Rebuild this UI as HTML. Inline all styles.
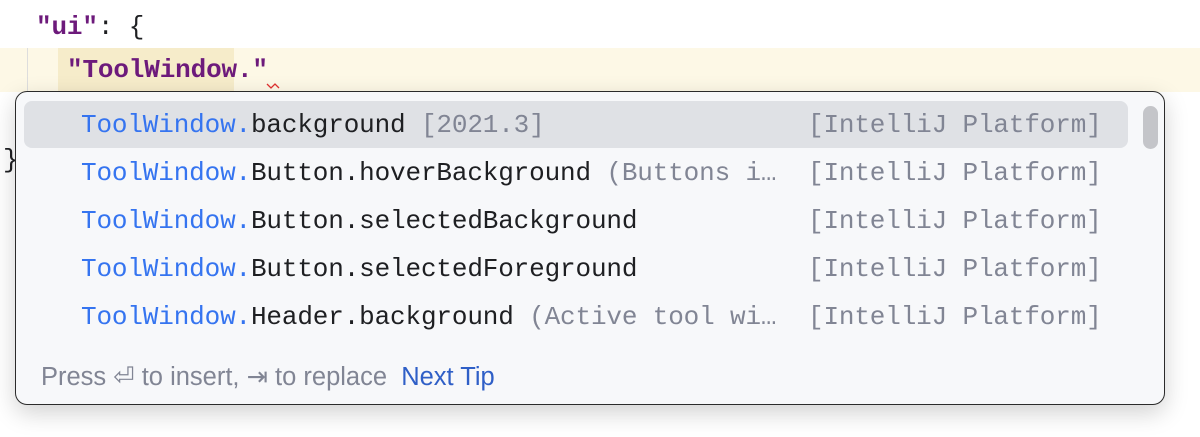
<!DOCTYPE html>
<html><head><meta charset="utf-8"><style>
*{margin:0;padding:0;box-sizing:border-box}
body{width:1200px;height:437px;background:#fff;position:relative;overflow:hidden;font-family:"Liberation Mono",monospace;}
.mono{font-family:"Liberation Mono",monospace;font-size:26px;white-space:pre;position:absolute;line-height:30px;letter-spacing:-0.15px}
.band{position:absolute;left:0;top:48px;width:1200px;height:44px;background:#fdf8e6}
.hl{position:absolute;left:58px;top:48px;width:176px;height:44px;background:#f6ecca}
.guide{position:absolute;left:27px;top:48px;width:1px;height:44px;background:#ddd}
.popup{position:absolute;left:15px;top:91px;width:1150px;height:314px;background:#f7f8fa;border:1px solid #2b2b2b;border-radius:12px;box-shadow:0 8px 24px rgba(0,0,0,.18)}
.sel{position:absolute;left:8px;top:9px;width:1104px;height:47px;background:#dfe1e5;border-radius:8px}
.sb{position:absolute;left:1127px;top:14px;width:15px;height:43px;background:#c4c5c9;border-radius:8px}
.row{left:65px}
.b{color:#3574f0}.k{color:#1e1f22}.g{color:#818594}
.r{position:absolute;left:792px;color:#818594}
.foot{position:absolute;left:25px;top:270px;font-family:"Liberation Sans",sans-serif;font-size:25.5px;color:#818594;white-space:pre}
.foot a{color:#2f5fc7;text-decoration:none}
</style></head><body>
<div class="band"></div><div class="hl"></div><div class="guide"></div>
<div class="mono" style="left:36px;top:12px;color:#1e1f22"><b style="color:#6d1a7b">"ui"</b>: {</div>
<div class="mono" style="left:67px;top:55px"><b style="color:#6d1a7b">"ToolWindow."</b></div>
<svg style="position:absolute;left:266px;top:83px" width="14" height="6"><path d="M1 1 L5 5 L9 1 L13 5" stroke="#e0302f" fill="none" stroke-width="1.3"/></svg>
<div class="mono" style="left:3px;top:145px;color:#1e1f22">}</div>
<div class="popup">
<div class="sel"></div><div class="sb"></div>
<div class="mono row" style="top:18px"><span class="b">ToolWindow.</span><span class="k">background</span> <span class="g">[2021.3]</span></div>
<div class="mono row" style="top:66px"><span class="b">ToolWindow.</span><span class="k">Button.hoverBackground</span> <span class="g">(Buttons i…</span></div>
<div class="mono row" style="top:114px"><span class="b">ToolWindow.</span><span class="k">Button.selectedBackground</span></div>
<div class="mono row" style="top:162px"><span class="b">ToolWindow.</span><span class="k">Button.selectedForeground</span></div>
<div class="mono row" style="top:210px"><span class="b">ToolWindow.</span><span class="k">Header.background</span> <span class="g">(Active tool wi…</span></div>
<div class="mono r" style="top:18px">[IntelliJ Platform]</div>
<div class="mono r" style="top:66px">[IntelliJ Platform]</div>
<div class="mono r" style="top:114px">[IntelliJ Platform]</div>
<div class="mono r" style="top:162px">[IntelliJ Platform]</div>
<div class="mono r" style="top:210px">[IntelliJ Platform]</div>
<div class="foot">Press ⏎ to insert, ⇥ to replace  <a>Next Tip</a></div>
</div>
</body></html>
